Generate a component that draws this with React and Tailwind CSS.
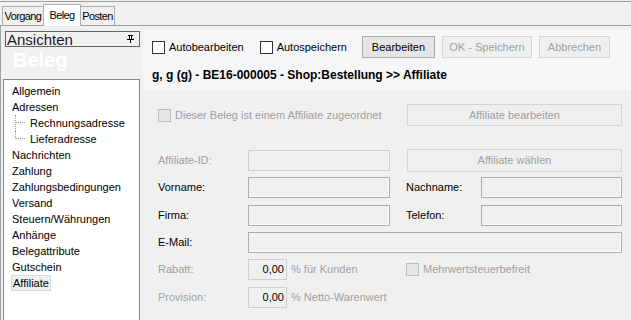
import React from 'react';

const font = { fontFamily: '"Liberation Sans", Arial, sans-serif' };

const Check = ({ label, disabled }) => (
  <div className={`flex items-center gap-[4px] ${disabled ? 'text-[#a0a0a0]' : 'text-black'}`}>
    <span
      className={`w-[13px] h-[13px] border ${
        disabled ? 'border-[#bcbcbc] bg-[#e6e6e6]' : 'border-[#333333] bg-white'
      }`}
    />
    <span>{label}</span>
  </div>
);

const Btn = ({ children, disabled, className = '' }) => (
  <div
    className={`h-[22px] flex items-center justify-center border ${
      disabled
        ? 'border-[#d4d4d4] bg-[#efefef] text-[#a0a0a0]'
        : 'border-[#adadad] bg-[#e5e5e5] text-black'
    } ${className}`}
  >
    {children}
  </div>
);

const Input = ({ disabled, className = '', children }) => (
  <div
    className={`h-[21px] border ${
      disabled ? 'border-[#cfcfcf]' : 'border-[#acacac] shadow-[inset_-1px_-1px_0_#ffffff]'
    } bg-[#f0f0f0] ${className}`}
  >
    {children}
  </div>
);

const treeItems = [
  'Allgemein',
  'Adressen',
  null,
  null,
  'Nachrichten',
  'Zahlung',
  'Zahlungsbedingungen',
  'Versand',
  'Steuern/Währungen',
  'Anhänge',
  'Belegattribute',
  'Gutschein',
];

export default function App() {
  return (
    <div className="w-[631px] h-[320px] overflow-hidden bg-[#f0f0f0] text-[11px] flex flex-col" style={font}>
      {/* top line */}
      <div className="h-[2px] border-t border-[#a0a0a0] mt-[1px]" />

      {/* tabs */}
      <div className="h-[23px] flex items-end pl-[2px] border-b border-[#a0a0a0] relative text-[11px] tracking-[-0.6px]">
        <div className="h-[19px] w-[41px] border border-b-0 border-r-0 border-[#b0b0b0] flex items-center justify-center">Vorgang</div>
        <div className="h-[22px] w-[38px] bg-white border border-b-0 border-[#b0b0b0] flex items-start justify-center pt-[2px] mb-[-1px] relative">
          Beleg
        </div>
        <div className="h-[19px] w-[34px] border border-b-0 border-l-0 border-[#b0b0b0] flex items-center justify-center">Posten</div>
      </div>

      {/* body */}
      <div className="flex-1 flex border-l border-[#a0a0a0] min-h-0">
        {/* left panel */}
        <div className="w-[142px] flex flex-col pl-[2px] pt-[5px]">
          <div className="ml-[2px] w-[135px] h-[16px] border border-[#646464] flex items-center justify-between pl-[1px] pr-[5px]">
            <span className="text-[15px] leading-none text-[#1a1a2a]">Ansichten</span>
            <svg width="7" height="8" viewBox="0 0 7 8">
              <rect x="1" y="0" width="5" height="1" fill="#000" />
              <rect x="2" y="1" width="1" height="3" fill="#000" />
              <rect x="4" y="1" width="1" height="3" fill="#000" />
              <rect x="0" y="4" width="7" height="1" fill="#000" />
              <rect x="3" y="5" width="1" height="3" fill="#000" />
            </svg>
          </div>
          <div className="pl-[10px] h-[32px] flex items-center text-[20px] font-bold text-white -mt-[3px] mb-[3px]">Beleg</div>
          <div className="flex-1 w-[137px] bg-white border border-[#828790] border-b-0 pt-[3px] pl-[7px]">
            {treeItems.map((t, i) =>
              t === null ? (
                <div key={i} className="h-[16px] flex items-center">
                  <div className="w-[5px] self-stretch border-l border-dotted border-[#a0a0a0] ml-[4px] flex flex-col">
                    <div className="h-[8px] border-b border-dotted border-[#a0a0a0] w-[9px]" />
                    {i === 3 ? <div className="flex-1 bg-white -ml-[1px]" /> : null}
                  </div>
                  <span className="ml-[10px] leading-[16px]">{i === 2 ? 'Rechnungsadresse' : 'Lieferadresse'}</span>
                </div>
              ) : (
                <div key={i} className="h-[16px] leading-[16px] pl-[1px]">{t}</div>
              )
            )}
            <div className="h-[16px] leading-[14px] inline-block px-[1px] border border-[#d9d9d9] bg-[#f0f0f0]">Affiliate</div>
          </div>
        </div>

        {/* right panel */}
        <div className="flex-1 flex flex-col pt-[3px]">
          <div className="h-[61px] bg-[#f5f6f7] pl-[9px] pt-[7px] flex flex-col">
            <div className="flex items-center h-[22px]">
              <Check label="Autobearbeiten" />
              <div className="w-[16px]" />
              <Check label="Autospeichern" />
              <div className="w-[15px]" />
              <Btn className="w-[73px]">Bearbeiten</Btn>
              <div className="w-[7px]" />
              <Btn disabled className="w-[90px]">OK - Speichern</Btn>
              <div className="w-[7px]" />
              <Btn disabled className="w-[71px]">Abbrechen</Btn>
            </div>
            <div className="mt-[11px] text-[12px] font-bold leading-none">
              g, g (g) - BE16-000005 - Shop:Bestellung &gt;&gt; Affiliate
            </div>
          </div>

          <div className="pl-[15px] pt-[14px] flex flex-col">
            <div className="flex items-center h-[22px]">
              <div className="w-[249px]">
                <Check disabled label="Dieser Beleg ist einem Affiliate zugeordnet" />
              </div>
              <Btn disabled className="w-[215px]">Affiliate bearbeiten</Btn>
            </div>

            <div className="flex items-center mt-[23px]">
              <span className="w-[90px] text-[#a0a0a0]">Affiliate-ID:</span>
              <Input disabled className="w-[142px]" />
              <div className="w-[17px]" />
              <Btn disabled className="w-[215px] h-[23px]">Affiliate wählen</Btn>
            </div>

            <div className="flex items-center mt-[5px]">
              <span className="w-[90px]">Vorname:</span>
              <Input className="w-[142px]" />
              <div className="w-[16px]" />
              <span className="w-[75px]">Nachname:</span>
              <Input className="w-[141px]" />
            </div>

            <div className="flex items-center mt-[7px]">
              <span className="w-[90px]">Firma:</span>
              <Input className="w-[142px]" />
              <div className="w-[16px]" />
              <span className="w-[75px]">Telefon:</span>
              <Input className="w-[141px]" />
            </div>

            <div className="flex items-center mt-[6px]">
              <span className="w-[90px]">E-Mail:</span>
              <Input className="w-[374px]" />
            </div>

            <div className="flex items-center mt-[6px]">
              <span className="w-[90px] text-[#a0a0a0]">Rabatt:</span>
              <Input disabled className="w-[39px] flex items-center justify-end pr-[2px] text-black">0,00</Input>
              <span className="ml-[4px] w-[115px] text-[#a0a0a0]">% für Kunden</span>
              <Check disabled label="Mehrwertsteuerbefreit" />
            </div>

            <div className="flex items-center mt-[7px]">
              <span className="w-[90px] text-[#a0a0a0]">Provision:</span>
              <Input disabled className="w-[39px] flex items-center justify-end pr-[2px] text-black">0,00</Input>
              <span className="ml-[4px] text-[#a0a0a0]">% Netto-Warenwert</span>
            </div>
          </div>
        </div>
      </div>
    </div>
  );
}
